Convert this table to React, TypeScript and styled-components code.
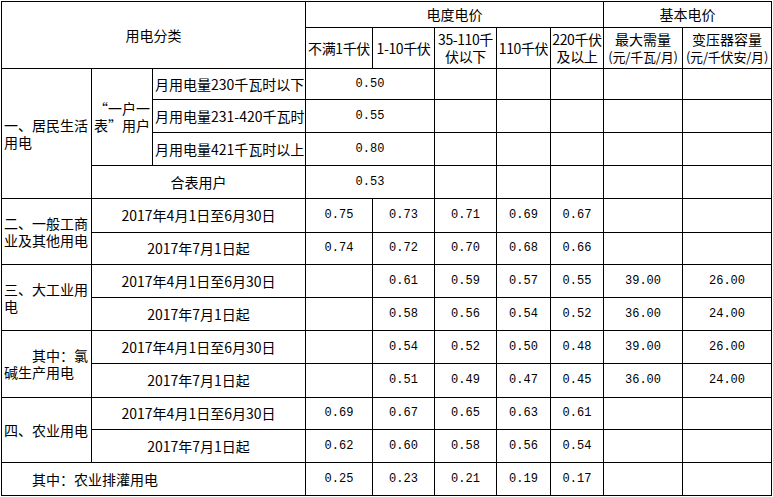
import React from "react";
import styled, { createGlobalStyle } from "styled-components";

const GlobalStyle = createGlobalStyle`
  html, body {
    margin: 0;
    padding: 0;
    background: #fff;
  }
  body {
    font-family: "Noto Sans CJK SC", "Noto Sans", sans-serif;
    color: #000;
  }
`;

const colWidths = [89, 60, 152, 66, 61, 61, 53, 52, 78, 88];
const rowHeights = [25, 40, 30, 32, 32, 32, 33, 31, 32, 32, 32, 33, 31, 32, 32];

const Page = styled.div`
  padding: 1px 0 0 1px;
`;

const Table = styled.div`
  display: inline-grid;
  grid-template-columns: ${colWidths.map((w) => w + "px").join(" ")};
  grid-template-rows: ${rowHeights.map((h) => h + "px").join(" ")};
  gap: 1px;
  padding: 1px;
  background: #000;
`;

const Cell = styled.div<{
  $c: number;
  $r: number;
  $cs: number;
  $rs: number;
  $left?: boolean;
  $num?: boolean;
  $tight?: boolean;
}>`
  grid-column: ${(p) => p.$c} / span ${(p) => p.$cs};
  grid-row: ${(p) => p.$r} / span ${(p) => p.$rs};
  background: #fff;
  display: flex;
  align-items: center;
  justify-content: ${(p) => (p.$left ? "flex-start" : "center")};
  text-align: ${(p) => (p.$left ? "left" : "center")};
  padding: 0 ${(p) => (p.$left ? "2px" : "0")};
  white-space: pre;
  overflow: hidden;
  font-family: ${(p) =>
    p.$num
      ? '"Liberation Mono", monospace'
      : '"Noto Sans CJK SC", "Noto Sans", sans-serif'};
  font-size: ${(p) => (p.$num ? "12px" : "14px")};
  letter-spacing: ${(p) => (p.$tight ? "-0.4px" : "0")};
  line-height: 17px;
`;

const Text = styled.span`
  display: block;
`;

const Small = styled.span`
  display: block;
  font-size: 13px;
  letter-spacing: -0.2px;
`;

type CellDef = {
  t?: React.ReactNode;
  c: number;
  r: number;
  cs?: number;
  rs?: number;
  left?: boolean;
  num?: boolean;
  tight?: boolean;
};

const cells: CellDef[] = [
  { t: "用电分类", c: 1, r: 1, cs: 3, rs: 2 },
  { t: "电度电价", c: 4, r: 1, cs: 5 },
  { t: "基本电价", c: 9, r: 1, cs: 2 },
  { t: "不满1千伏", c: 4, r: 2, tight: true },
  { t: "1-10千伏", c: 5, r: 2, tight: true },
  { t: "35-110千\n伏以下", c: 6, r: 2, tight: true },
  { t: "110千伏", c: 7, r: 2, tight: true },
  { t: "220千伏\n及以上", c: 8, r: 2, tight: true },
  {
    t: (
      <>
        最大需量
        <Small>(元/千瓦/月)</Small>
      </>
    ),
    c: 9,
    r: 2,
  },
  {
    t: (
      <>
        变压器容量
        <Small>(元/千伏安/月)</Small>
      </>
    ),
    c: 10,
    r: 2,
  },

  { t: "一、居民生活\n用电", c: 1, r: 3, rs: 4, left: true },
  { t: "“一户一\n表”用户", c: 2, r: 3, rs: 3 },
  { t: "月用电量230千瓦时以下", c: 3, r: 3, left: true },
  { t: "月用电量231-420千瓦时", c: 3, r: 4, left: true },
  { t: "月用电量421千瓦时以上", c: 3, r: 5, left: true },
  { t: "合表用户", c: 2, r: 6, cs: 2 },
  { t: "0.50", c: 4, r: 3, cs: 2, num: true },
  { t: "0.55", c: 4, r: 4, cs: 2, num: true },
  { t: "0.80", c: 4, r: 5, cs: 2, num: true },
  { t: "0.53", c: 4, r: 6, cs: 2, num: true },
];

for (let r = 3; r <= 6; r++) {
  for (let c = 6; c <= 10; c++) cells.push({ c, r });
}

const groups: { label: string; row: number; vals: string[][] }[] = [
  {
    label: "二、一般工商\n业及其他用电",
    row: 7,
    vals: [
      ["0.75", "0.73", "0.71", "0.69", "0.67", "", ""],
      ["0.74", "0.72", "0.70", "0.68", "0.66", "", ""],
    ],
  },
  {
    label: "三、大工业用\n电",
    row: 9,
    vals: [
      ["", "0.61", "0.59", "0.57", "0.55", "39.00", "26.00"],
      ["", "0.58", "0.56", "0.54", "0.52", "36.00", "24.00"],
    ],
  },
  {
    label: "\u3000\u3000其中：氯\n碱生产用电",
    row: 11,
    vals: [
      ["", "0.54", "0.52", "0.50", "0.48", "39.00", "26.00"],
      ["", "0.51", "0.49", "0.47", "0.45", "36.00", "24.00"],
    ],
  },
  {
    label: "四、农业用电",
    row: 13,
    vals: [
      ["0.69", "0.67", "0.65", "0.63", "0.61", "", ""],
      ["0.62", "0.60", "0.58", "0.56", "0.54", "", ""],
    ],
  },
];

const dates = ["2017年4月1日至6月30日", "2017年7月1日起"];

groups.forEach((g) => {
  cells.push({ t: g.label, c: 1, r: g.row, rs: 2, left: true });
  g.vals.forEach((line, i) => {
    cells.push({ t: dates[i], c: 2, r: g.row + i, cs: 2 });
    line.forEach((v, j) => cells.push({ t: v, c: 4 + j, r: g.row + i, num: true }));
  });
});

cells.push({ t: "\u3000\u3000其中：农业排灌用电", c: 1, r: 15, cs: 3, left: true });
["0.25", "0.23", "0.21", "0.19", "0.17", "", ""].forEach((v, j) =>
  cells.push({ t: v, c: 4 + j, r: 15, num: true })
);

export default function App() {
  return (
    <Page>
      <GlobalStyle />
      <Table>
        {cells.map((d, i) => (
          <Cell
            key={i}
            $c={d.c}
            $r={d.r}
            $cs={d.cs ?? 1}
            $rs={d.rs ?? 1}
            $left={d.left}
            $num={d.num}
            $tight={d.tight}
          >
            {d.t ? <Text>{d.t}</Text> : null}
          </Cell>
        ))}
      </Table>
    </Page>
  );
}
